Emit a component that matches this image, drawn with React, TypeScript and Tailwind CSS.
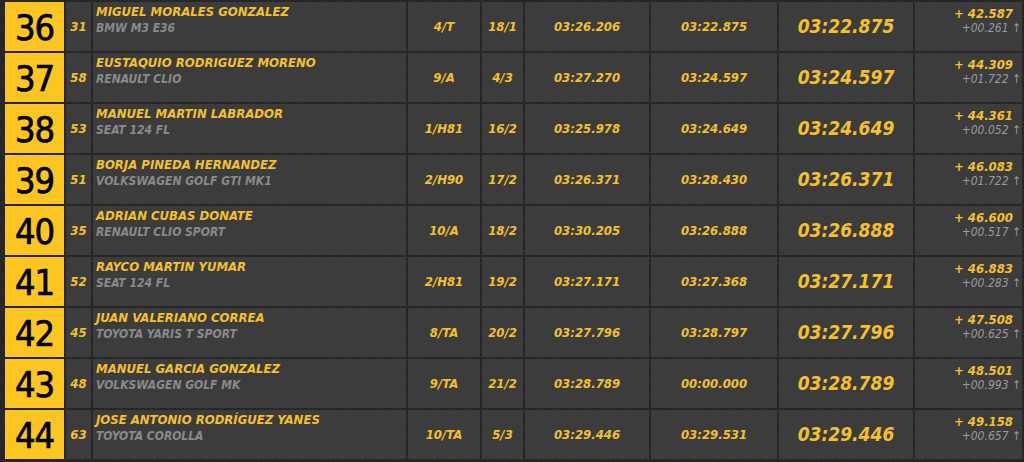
type Row = {
  pos: string
  num: string
  name: string
  car: string
  cls: string
  catPos: string
  t1: string
  t2: string
  best: string
  gap: string
  diff: string
}

const rows: Row[] = [
  { pos: '36', num: '31', name: 'MIGUEL MORALES GONZALEZ', car: 'BMW M3 E36', cls: '4/T', catPos: '18/1', t1: '03:26.206', t2: '03:22.875', best: '03:22.875', gap: '+ 42.587', diff: '+00.261' },
  { pos: '37', num: '58', name: 'EUSTAQUIO RODRIGUEZ MORENO', car: 'RENAULT CLIO', cls: '9/A', catPos: '4/3', t1: '03:27.270', t2: '03:24.597', best: '03:24.597', gap: '+ 44.309', diff: '+01.722' },
  { pos: '38', num: '53', name: 'MANUEL MARTIN LABRADOR', car: 'SEAT 124 FL', cls: '1/H81', catPos: '16/2', t1: '03:25.978', t2: '03:24.649', best: '03:24.649', gap: '+ 44.361', diff: '+00.052' },
  { pos: '39', num: '51', name: 'BORJA PINEDA HERNANDEZ', car: 'VOLKSWAGEN GOLF GTI MK1', cls: '2/H90', catPos: '17/2', t1: '03:26.371', t2: '03:28.430', best: '03:26.371', gap: '+ 46.083', diff: '+01.722' },
  { pos: '40', num: '35', name: 'ADRIAN CUBAS DONATE', car: 'RENAULT CLIO SPORT', cls: '10/A', catPos: '18/2', t1: '03:30.205', t2: '03:26.888', best: '03:26.888', gap: '+ 46.600', diff: '+00.517' },
  { pos: '41', num: '52', name: 'RAYCO MARTIN YUMAR', car: 'SEAT 124 FL', cls: '2/H81', catPos: '19/2', t1: '03:27.171', t2: '03:27.368', best: '03:27.171', gap: '+ 46.883', diff: '+00.283' },
  { pos: '42', num: '45', name: 'JUAN VALERIANO CORREA', car: 'TOYOTA YARIS T SPORT', cls: '8/TA', catPos: '20/2', t1: '03:27.796', t2: '03:28.797', best: '03:27.796', gap: '+ 47.508', diff: '+00.625' },
  { pos: '43', num: '48', name: 'MANUEL GARCIA GONZALEZ', car: 'VOLKSWAGEN GOLF MK', cls: '9/TA', catPos: '21/2', t1: '03:28.789', t2: '00:00.000', best: '03:28.789', gap: '+ 48.501', diff: '+00.993' },
  { pos: '44', num: '63', name: 'JOSE ANTONIO RODRÍGUEZ YANES', car: 'TOYOTA COROLLA', cls: '10/TA', catPos: '5/3', t1: '03:29.446', t2: '03:29.531', best: '03:29.446', gap: '+ 49.158', diff: '+00.657' }
]

const cell = 'bg-[#3c3c3c] flex items-center justify-center italic font-bold text-[#f5c02a]'

export default function App() {
  return (
    <div className="w-[1024px] h-[462px] overflow-hidden bg-[#262626] bg-[repeating-linear-gradient(45deg,#2c2c2c_0_1px,#242424_1px_3px)] pl-[5px] pr-[2px] pt-[2px] flex flex-col gap-[2px] font-['DejaVu_Sans',sans-serif] font-stretch-condensed">
      {rows.map((r) => (
        <div key={r.pos} className="flex h-[49px] gap-[2px] shrink-0">
          <div className="w-[59px] bg-[#fcc521] flex items-center justify-center pt-[2px] text-[36px] leading-none text-black tracking-[-1px] [-webkit-text-stroke:0.7px_black]">
            {r.pos}
          </div>
          <div className={`${cell} w-[25px] text-[13px]`}>{r.num}</div>
          <div className="w-[313px] bg-[#3c3c3c] pl-[3px] pt-[2px] italic flex flex-col">
            <span className="text-[13px] font-bold text-[#f5c02a] leading-[16px]">{r.name}</span>
            <span className="text-[12px] font-bold text-[#8a8a8a] leading-[16px]">{r.car}</span>
          </div>
          <div className={`${cell} w-[72px] text-[13px]`}>{r.cls}</div>
          <div className={`${cell} w-[41px] text-[13px]`}>{r.catPos}</div>
          <div className={`${cell} w-[124px] text-[13px]`}>{r.t1}</div>
          <div className={`${cell} w-[126px] text-[13px]`}>{r.t2}</div>
          <div className={`${cell} w-[134px] text-[19px]`}>{r.best}</div>
          <div className="w-[107px] bg-[#3c3c3c] flex flex-col items-end pt-[4px] italic">
            <span className="text-[13px] font-bold text-[#f5c02a] leading-[15px] pr-[9px]">{r.gap}</span>
            <span className="text-[12px] text-[#9a9a9a] leading-[15px] pr-[1px]">
              {r.diff} <span className="not-italic">↑</span>
            </span>
          </div>
        </div>
      ))}
    </div>
  )
}
